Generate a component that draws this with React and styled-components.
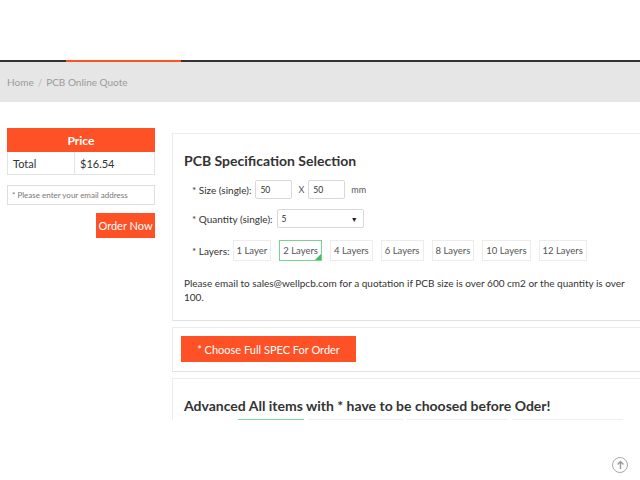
import React from "react";
import styled, { createGlobalStyle } from "styled-components";

const ORANGE = "#fe5126";

const Global = createGlobalStyle`
  html, body { margin: 0; padding: 0; background: #fff; overflow: hidden; }
  body { font-family: Lato, "Noto Sans", sans-serif; color: #333; }
  * { box-sizing: border-box; }
`;

const Page = styled.div`
  width: 640px;
  height: 480px;
  position: relative;
  overflow: hidden;
`;

const TopSpace = styled.div`
  height: 60px;
  background: #fff;
`;

const NavLine = styled.div`
  height: 2px;
  background: #333;
  display: flex;
`;

const NavActive = styled.div`
  margin-left: 66px;
  width: 115px;
  height: 2px;
  background: ${ORANGE};
`;

const Breadcrumb = styled.div`
  height: 40px;
  background: #e6e6e6;
  display: flex;
  align-items: center;
  padding-left: 7px;
  gap: 4px;
  font-size: 10px;
  color: #9a9a9a;
`;

const Sep = styled.span`
  color: #bbb;
`;

const Clip = styled.div`
  height: 318px;
  overflow: hidden;
`;

const Main = styled.div`
  display: flex;
  align-items: flex-start;
  padding: 26px 0 0 7px;
  gap: 17px;
  width: 760px;
`;

const Side = styled.div`
  width: 148px;
  display: flex;
  flex-direction: column;
  align-items: flex-end;
`;

const PriceTable = styled.div`
  width: 100%;
  border: 1px solid #e3e3e3;
  border-top: none;
`;

const PriceHead = styled.div`
  height: 24px;
  background: ${ORANGE};
  color: #fff;
  font-weight: 700;
  font-size: 12px;
  display: flex;
  align-items: center;
  justify-content: center;
  margin: 0 -1px;
`;

const PriceRow = styled.div`
  display: grid;
  grid-template-columns: 66px 1fr;
  height: 22px;
  font-size: 11px;
  color: #333;
`;

const Cell = styled.div`
  display: flex;
  align-items: center;
  padding-left: 5px;
  border-left: ${(p) => (p.$divider ? "1px solid #e3e3e3" : "none")};
`;

const Email = styled.div`
  width: 100%;
  margin-top: 10px;
  height: 20px;
  border: 1px solid #dedede;
  display: flex;
  align-items: center;
  padding-left: 4px;
  font-size: 8px;
  color: #777;
`;

const OrderBtn = styled.div`
  margin-top: 8px;
  width: 59px;
  height: 25px;
  background: ${ORANGE};
  color: #fff;
  font-size: 11px;
  display: flex;
  align-items: center;
  justify-content: center;
`;

const Content = styled.div`
  margin-top: 5px;
  width: 560px;
  display: flex;
  flex-direction: column;
  gap: 6px;
`;

const Card = styled.div`
  border: 1px solid #e9ebef;
  border-bottom-color: #dfe2e7;
  background: #fff;
  padding: ${(p) => p.$pad || "17px 11px 16px"};
`;

const Title = styled.h2`
  margin: 0;
  font-size: 14px;
  font-weight: 700;
  color: #333;
  line-height: 20px;
`;

const Row = styled.div`
  display: flex;
  align-items: center;
  gap: ${(p) => p.$gap || "3px"};
  padding-left: 8px;
  font-size: 10px;
  color: #333;
  margin-top: ${(p) => p.$mt || "0"};
`;

const Input = styled.div`
  width: ${(p) => p.$w}px;
  height: 19px;
  border: 1px solid #d9d9d9;
  border-radius: 2px;
  display: flex;
  align-items: center;
  padding-left: 4px;
  font-size: 8.5px;
  color: #333;
`;

const Select = styled(Input)`
  justify-content: space-between;
  padding-right: 5px;
`;

const Arrow = styled.span`
  font-size: 7px;
  color: #222;
`;

const Unit = styled.span`
  font-size: 9px;
  color: #555;
  margin-left: 2px;
`;

const Layers = styled.div`
  display: flex;
  gap: 8px;
`;

const LayerBtn = styled.div`
  position: relative;
  height: 21px;
  padding: 0 3px;
  border: 1px solid ${(p) => (p.$active ? "#79d48f" : "#ececec")};
  display: flex;
  align-items: center;
  font-size: 9.5px;
  color: #555;
  white-space: nowrap;
`;

const Corner = styled.span`
  position: absolute;
  right: 0;
  bottom: 0;
  width: 0;
  height: 0;
  border-style: solid;
  border-width: 0 0 6px 6px;
  border-color: transparent transparent #3fbf5c transparent;
`;

const Note = styled.p`
  margin: 15px 0 0;
  max-width: 445px;
  font-size: 10px;
  line-height: 14px;
  color: #333;
`;

const SpecBtn = styled.div`
  width: 175px;
  height: 26px;
  background: ${ORANGE};
  color: #fff;
  font-size: 11px;
  display: flex;
  align-items: center;
  justify-content: center;
`;

const Tabs = styled.div`
  display: flex;
  margin: 3px 0 0 54px;
  gap: 4px;
`;

const Tab = styled.div`
  width: ${(p) => p.$w}px;
  height: 30px;
  border-top: 1px solid ${(p) => (p.$active ? "#7fd99a" : "#eeeeee")};
`;

const TopBtn = styled.div`
  position: absolute;
  right: 12px;
  bottom: 7px;
  width: 16px;
  height: 16px;
  border-radius: 50%;
  border: 1.2px solid #aaa;
  display: flex;
  align-items: center;
  justify-content: center;
`;

export default function App() {
  const layers = ["1 Layer", "2 Layers", "4 Layers", "6 Layers", "8 Layers", "10 Layers", "12 Layers"];
  return (
    <Page>
      <Global />
      <TopSpace />
      <NavLine>
        <NavActive />
      </NavLine>
      <Breadcrumb>
        <span>Home</span>
        <Sep>/</Sep>
        <span>PCB Online Quote</span>
      </Breadcrumb>
      <Clip>
        <Main>
          <Side>
            <PriceTable>
              <PriceHead>Price</PriceHead>
              <PriceRow>
                <Cell>Total</Cell>
                <Cell $divider>$16.54</Cell>
              </PriceRow>
            </PriceTable>
            <Email>* Please enter your email address</Email>
            <OrderBtn>Order Now</OrderBtn>
          </Side>
          <Content>
            <Card>
              <Title>PCB Specification Selection</Title>
              <Row $mt="9px" $gap="4px">
                <span>* Size (single):</span>
                <Input $w={37}>50</Input>
                <Unit>X</Unit>
                <Input $w={37}>50</Input>
                <Unit>mm</Unit>
              </Row>
              <Row $mt="10px" $gap="4px">
                <span>* Quantity (single):</span>
                <Select $w={87}>
                  5<Arrow>▼</Arrow>
                </Select>
              </Row>
              <Row $mt="12px" $gap="3px">
                <span>* Layers:</span>
                <Layers>
                  {layers.map((l, i) => (
                    <LayerBtn key={l} $active={i === 1}>
                      {l}
                      {i === 1 && <Corner />}
                    </LayerBtn>
                  ))}
                </Layers>
              </Row>
              <Note>
                Please email to sales@wellpcb.com for a quotation if PCB size is over 600 cm2 or the quantity is over 100.
              </Note>
            </Card>
            <Card $pad="8px 8px 9px">
              <SpecBtn>* Choose Full SPEC For Order</SpecBtn>
            </Card>
            <Card $pad="17px 11px 0">
              <Title>Advanced All items with * have to be choosed before Oder!</Title>
              <Tabs>
                <Tab $w={66} $active />
                <Tab $w={95} />
                <Tab $w={101} />
                <Tab $w={111} />
              </Tabs>
            </Card>
          </Content>
        </Main>
      </Clip>
      <TopBtn>
        <svg width="9" height="10" viewBox="0 0 9 10" fill="none" stroke="#999" strokeWidth="1.4">
          <path d="M4.5 9V1.5M1.5 4.5L4.5 1.5L7.5 4.5" />
        </svg>
      </TopBtn>
    </Page>
  );
}
